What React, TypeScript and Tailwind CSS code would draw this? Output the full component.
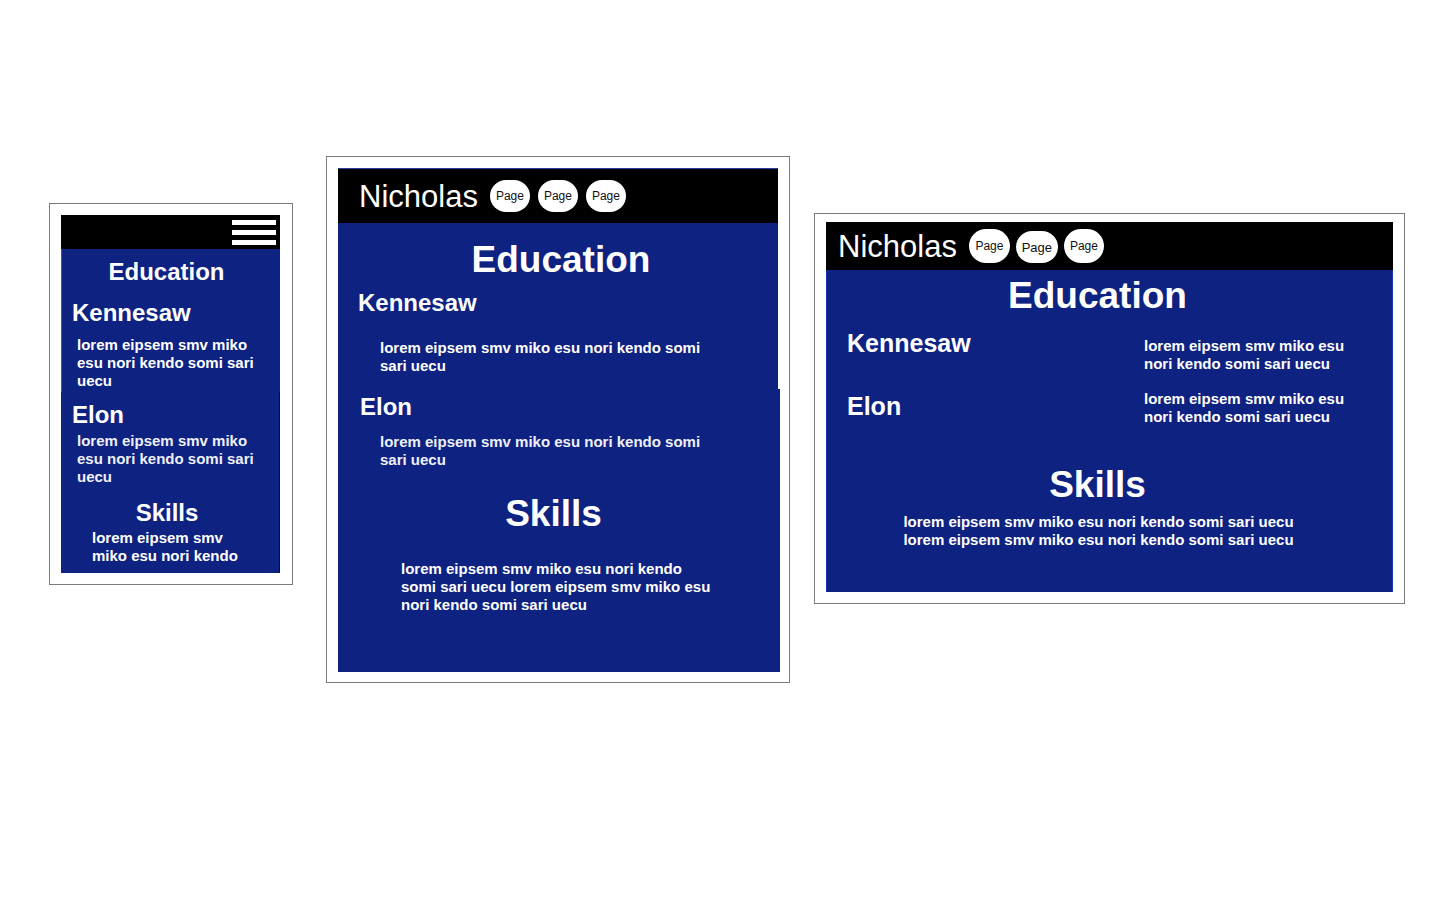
import React from 'react';

const font = { fontFamily: '"Liberation Sans", Arial, sans-serif' };

const lorem = 'lorem eipsem smv miko esu nori kendo somi sari uecu';
const loremTwice = `${lorem} ${lorem}`;

function Pill({ className = '' }: { className?: string }) {
  return (
    <span
      className={`flex h-[32px] w-[40px] items-center justify-center rounded-full bg-white text-[12px] leading-none text-[#111] ${className}`}
    >
      Page
    </span>
  );
}

// Phone sized mockup
function MobileFrame() {
  return (
    <div className="mt-[203px] w-[244px] shrink-0 border border-[#7a7a7a] bg-white p-[11px] pr-[12px]">
      <div className="flex h-[34px] items-center justify-end bg-black pr-[4px]">
        <div className="flex flex-col gap-[5px]">
          <span className="block h-[5px] w-[44px] bg-white" />
          <span className="block h-[5px] w-[44px] bg-white" />
          <span className="block h-[5px] w-[44px] bg-white" />
        </div>
      </div>
      <div className="bg-[#0e2281] text-white">
        <div className="border-l border-[#3450d8] pt-[9px] pb-[2px]">
          <h2 className="pr-[9px] text-center text-[24px] leading-[28px] font-bold">Education</h2>
          <h3 className="mt-[13px] pl-[10px] text-[24px] leading-[28px] font-bold">Kennesaw</h3>
          <p className="mt-[9px] w-[200px] pl-[15px] text-[15px] leading-[18px] font-bold">
            {lorem}
          </p>
        </div>
        <div className="border-r border-[#111] pt-[9px] pb-[8px]">
          <h3 className="pl-[11px] text-[24px] leading-[28px] font-bold">Elon</h3>
          <p className="mt-[3px] w-[201px] pl-[16px] text-[15px] leading-[18px] font-bold text-[#eef0f8]">
            {lorem}
          </p>
          <h2 className="mt-[13px] pr-[6px] text-center text-[24px] leading-[28px] font-bold">Skills</h2>
          <p className="mt-[2px] w-[186px] pl-[31px] text-[15px] leading-[18px] font-bold">
            lorem eipsem smv miko esu nori kendo
          </p>
        </div>
      </div>
    </div>
  );
}

// Tablet sized mockup
function TabletFrame() {
  return (
    <div className="mt-[156px] ml-[33px] w-[464px] shrink-0 border border-[#7a7a7a] bg-white p-[11px] pr-[9px] pb-[10px]">
      <div className="mr-[2px] flex h-[55px] items-center gap-[8px] border-t border-[#2b3fa8] bg-black pl-[21px]">
        <span className="mr-[4px] text-[31px] leading-none text-white">Nicholas</span>
        <Pill className="h-[30px] text-[11px]" />
        <Pill />
        <Pill />
      </div>
      <div className="mr-[2px] h-[166px] bg-[#0e2281] text-white">
        <h2 className="pt-[15px] pl-[6px] text-center text-[37px] leading-[44px] font-bold">Education</h2>
        <h3 className="mt-[7px] pl-[20px] text-[24px] leading-[28px] font-bold">Kennesaw</h3>
        <p className="mt-[22px] w-[372px] pl-[42px] text-[15px] leading-[18px] font-bold">{lorem}</p>
      </div>
      <div className="h-[283px] bg-[#0e2281] pt-[4px] text-white">
        <h3 className="pl-[22px] text-[24px] leading-[28px] font-bold">Elon</h3>
        <p className="mt-[12px] w-[372px] pl-[42px] text-[15px] leading-[18px] font-bold text-[#eef0f8]">
          {lorem}
        </p>
        <h2 className="mt-[23px] pr-[11px] text-center text-[37px] leading-[44px] font-bold">Skills</h2>
        <p className="mt-[24px] w-[377px] pl-[63px] text-[15px] leading-[18px] font-bold">{loremTwice}</p>
      </div>
    </div>
  );
}

// Desktop sized mockup
function DesktopFrame() {
  return (
    <div className="mt-[213px] ml-[24px] w-[591px] shrink-0 border border-[#7a7a7a] bg-white px-[11px] pt-[8px] pr-[11px] pb-[11px]">
      <div className="flex h-[48px] items-center gap-[6px] bg-black pl-[12px]">
        <span className="mr-[6px] text-[31px] leading-none text-white">Nicholas</span>
        <Pill className="h-[34px] w-[41px]" />
        <Pill className="h-[32px] w-[42px] translate-y-[1px] text-[13px]" />
        <Pill className="h-[34px] w-[39px]" />
      </div>
      <div className="h-[322px] border-x border-[#1d34b0] bg-[#0e2281] text-white">
        <h2 className="pt-[4px] pr-[24px] text-center text-[37px] leading-[44px] font-bold">Education</h2>
        <div className="mt-[11px] flex items-start">
          <h3 className="w-[317px] shrink-0 pl-[20px] text-[25px] leading-[28px] font-bold">Kennesaw</h3>
          <p className="mt-[8px] w-[215px] text-[15px] leading-[18px] font-bold">{lorem}</p>
        </div>
        <div className="mt-[17px] flex items-start">
          <h3 className="mt-[2px] w-[317px] shrink-0 pl-[20px] text-[25px] leading-[28px] font-bold">Elon</h3>
          <p className="w-[215px] text-[15px] leading-[18px] font-bold">{lorem}</p>
        </div>
        <h2 className="mt-[37px] pr-[24px] text-center text-[37px] leading-[44px] font-bold">Skills</h2>
        <div className="mt-[6px] pr-[22px] text-center text-[15px] leading-[18px] font-bold">
          <p>{lorem}</p>
          <p>{lorem}</p>
        </div>
      </div>
    </div>
  );
}

export default function App() {
  return (
    <div className="flex h-[900px] w-[1440px] items-start overflow-hidden bg-white pl-[49px]" style={font}>
      <MobileFrame />
      <TabletFrame />
      <DesktopFrame />
    </div>
  );
}
